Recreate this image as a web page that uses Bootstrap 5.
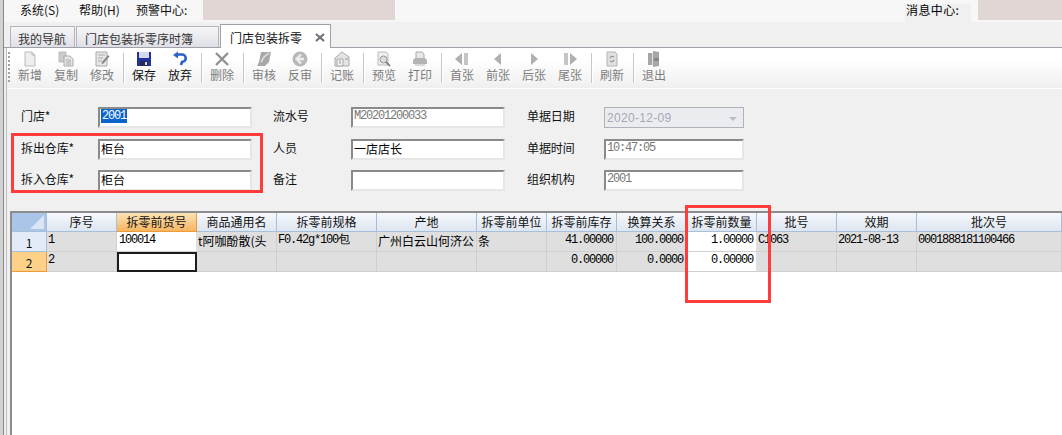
<!DOCTYPE html>
<html lang="zh">
<head>
<meta charset="utf-8">
<title>门店包装拆零</title>
<link href="https://cdn.jsdelivr.net/npm/bootstrap@5.3.0/dist/css/bootstrap.min.css" rel="stylesheet">
<style>
html,body{height:435px;overflow:hidden}
body{background:#f0f0f0;color:#000;font:12px/16px "Noto Sans CJK SC","Liberation Sans",sans-serif;position:relative}
.shell{border-left:3px solid #d2d2d2;height:435px}
.shell-inner{border-left:1px solid #888;height:100%;display:flex;flex-direction:column;min-height:0}
.topbar{height:22px;background:#f7f7f7;padding-left:16px;align-items:flex-start;flex:none}
.topbar .mi{line-height:20px;color:#111;flex:none}
.mi-a{width:59px}.mi-b{width:57px}.mi-c{width:67px}
.blk{width:192px;height:20px;background:#e0d6d4;flex:none}
.blk-r{width:84px}
.msg{margin:4px 7px 0 auto;line-height:12px;height:18px;padding:0 0 0 1px;width:66px;background:#f0f0f0;letter-spacing:.4px;flex:none}
.tabrow{height:26px;padding-left:6px;border-bottom:1px solid #a0a0a8;gap:1px;align-items:flex-end;flex:none}
.tabx{height:21px;border:1px solid #b4b4bc;border-bottom:0;background:linear-gradient(#f6f6f8,#dfe0e6);padding-left:7px;line-height:23px;color:#333;white-space:nowrap}
.tabx.t1{width:65px}
.tabx.t2{width:143px;padding-left:8px}
.tabx.on{width:111px;height:24px;background:#fff;border-color:#a0a0a8;margin:0 0 -1px 0;padding-left:9px;line-height:26px;color:#111;display:flex;position:relative;z-index:1}
.tabx svg{margin:8px 0 0 13px}
.workarea{flex:1;min-height:0;margin-left:2px;border-left:1px solid #bdbdbd;display:flex;flex-direction:column}
.tools{height:41px;background:linear-gradient(#fff 30%,#efefef);border-bottom:1px solid #fff;align-items:stretch;flex:none}
.grip{width:2px;margin:3px 2px 4px 1px;background-image:radial-gradient(#a0a0a0 45%,transparent 50%);background-size:2px 4px}
.tb{width:36px;color:#7d7d7d;text-align:center;padding-top:3px;line-height:14px;flex:none}
.tb svg{display:block;margin:0 auto 1px}
.tb.live{color:#111}
.sep{width:6px;position:relative;flex:none}
.sep::after{content:"";position:absolute;left:3px;top:5px;bottom:5px;width:1px;background:#c6c6c6;box-shadow:1px 0 0 #fff}
.formzone{height:122px;padding:18px 0 0 14px;display:grid;grid-template-columns:77px 154px 21px 78px 154px 22px 77px 140px;grid-auto-rows:21px;row-gap:10.5px;flex:none}
.lab{line-height:18px;color:#111;letter-spacing:-.1px}
.fld{border:2px solid;border-color:#8a8a8a #e6e6e6 #e6e6e6 #8a8a8a;background:#fff;padding:0 1px;line-height:15px;color:#000;overflow:hidden;white-space:nowrap}
.mono{font-family:"Liberation Mono",monospace;font-size:12px;letter-spacing:-1.2px;color:#777}
.fld .sel{background:#0a66cc;color:#fff;padding:0 1px}
.fld.dt{border:1px solid #aeb2ba;background:#ebecf0;color:#a5a8b4;font:12px/21px "Liberation Sans",sans-serif;letter-spacing:.3px;padding:0 0 0 2px;display:flex;justify-content:space-between}
.fld.dt i{width:0;height:0;border:4px solid transparent;border-top-color:#b9bcc6;border-bottom:0;margin:9px 6px 0 0}
.gridwrap{flex:1;background:#fff;border-top:2px solid #8c8c8c;border-left:2px solid #8c8c8c;margin-left:3px;min-height:0}
.sheet{table-layout:fixed;border-collapse:separate;border-spacing:0;width:1050px;margin:0;--bs-table-bg:transparent;--bs-table-border-color:transparent;color:#000}
.sheet th,.sheet td{padding:0;height:20px;overflow:hidden;white-space:nowrap;box-shadow:none;vertical-align:top;line-height:17px}
.sheet th{height:19px;font-weight:400;text-align:center;background:linear-gradient(#f6f8fc,#dde5f0);border-right:1px solid #a7bfd8;border-bottom:1px solid #a7bfd8;line-height:18px;color:#111}
.sheet th.corner{background:#a9c5e8;position:relative}
.sheet th.corner::after{content:"";position:absolute;right:2px;bottom:2px;border:7px solid transparent;border-right-color:#dbe6f4;border-bottom-color:#dbe6f4}
.sheet th.hot{background:linear-gradient(#fbe3b8,#f5b561);border-right-color:#f09a38;border-bottom-color:#f09a38}
.sheet th.rowh{height:20px;background:#e2ebf7;line-height:16px;padding-top:3px}
.sheet th.rowh.hot{background:#fdd188}
.sheet td{background:#dfdfdf;border-right:1px solid #cfcfcf;border-bottom:1px solid #cfcfcf;padding:0 1px;font-size:12px}
.sheet td.w{background:#fff;border-right-color:#dfdfdf;border-bottom-color:#cfcfcf}
.sheet td.cur{background:#fff;border:2px solid #1c1c1c}
.sheet td.m{font-family:"Liberation Mono",monospace;font-size:12px;letter-spacing:-1.2px}
.sheet td.pad{padding-left:2px}
.sheet td.r{text-align:right;padding-right:3px}
.redbox{position:absolute;border:3px solid #ff3b3b;pointer-events:none;z-index:5}
.rb1{left:11px;top:133px;width:252px;height:60px}
.rb2{left:685px;top:205px;width:86px;height:98px}
.c0{width:35px}.c1,.c6,.c7,.c8,.c9{width:70px}.c2,.c3,.c10,.c11{width:80px}.c4,.c5{width:100px}.c12{width:145px}
</style>
</head>
<body>
<div class="shell">
<div class="shell-inner">
  <div class="topbar d-flex">
    <span class="mi mi-a">系统(S)</span><span class="mi mi-b">帮助(H)</span><span class="mi mi-c">预警中心:</span>
    <div class="blk"></div>
    <div class="msg">消息中心:</div>
    <div class="blk blk-r"></div>
  </div>
  <div class="tabrow d-flex">
    <div class="tabx t1">我的导航</div>
    <div class="tabx t2">门店包装拆零序时簿</div>
    <div class="tabx on">门店包装拆零<svg width="10" height="9" viewBox="0 0 10 9"><path d="M1 1l8 7M9 1L1 8" stroke="#6f7078" stroke-width="2.2"/></svg></div>
  </div>
  <div class="workarea">
  <div class="tools d-flex">
    <div class="grip"></div>
    <div class="tb"><svg width="16" height="16" viewBox="0 0 16 16"><path d="M3 1h7l3 3v11H3z" fill="#eee" stroke="#bbb"/><path d="M10 1v3h3" fill="#ddd" stroke="#bbb"/></svg>新增</div>
    <div class="tb"><svg width="16" height="16" viewBox="0 0 16 16"><path d="M1 1h7v10H1z" fill="#ccc" stroke="#bbb"/><path d="M6 5h6l3 3v7H6z" fill="#e6e6e6" stroke="#aaa"/><path d="M8 9h5M8 11h5M8 13h5" stroke="#aaa"/></svg>复制</div>
    <div class="tb"><svg width="16" height="16" viewBox="0 0 16 16"><path d="M2 1h11v14H2z" fill="#e6e6e6" stroke="#aaa"/><path d="M4 4h7M4 7h5M4 10h4" stroke="#aaa"/><path d="M8 11l6-7 1.5 1.5-6 7-2 .5z" fill="#888"/></svg>修改</div>
    <div class="sep"></div>
    <div class="tb live"><svg width="16" height="16" viewBox="0 0 16 16"><path d="M1 1h14v14H1z" fill="#23319a"/><path d="M3 1h10v6H3z" fill="#d5d9f0"/><path d="M4 10h8v5H4z" fill="#222a55"/><path d="M9 11h2v3H9z" fill="#d5d9f0"/></svg>保存</div>
    <div class="tb live"><svg width="16" height="16" viewBox="0 0 16 16"><path d="M5 3.500h5a3.500 3.500 0 0 1 0 7.500l-1 3" fill="none" stroke="#2a62c8" stroke-width="2.6"/><path d="M1 4l5-3.500v7z" fill="#2a62c8"/></svg>放弃</div>
    <div class="sep"></div>
    <div class="tb"><svg width="16" height="16" viewBox="0 0 16 16"><path d="M2 2l12 12M14 2L2 14" stroke="#909090" stroke-width="2.4"/></svg>删除</div>
    <div class="sep"></div>
    <div class="tb"><svg width="16" height="16" viewBox="0 0 16 16"><path d="M5 1h10l-2 10-4 4H1l2-4z" fill="#a8a8a8"/><path d="M5 11l3-5 5-4" stroke="#e0e0e0" stroke-width="1.5" fill="none"/></svg>审核</div>
    <div class="tb"><svg width="16" height="16" viewBox="0 0 16 16"><circle cx="8" cy="8" r="7.500" fill="#b8b8b8"/><path d="M9 3.500L4.500 8 9 12.500M5 8h7" stroke="#eee" stroke-width="2.4" fill="none"/></svg>反审</div>
    <div class="sep"></div>
    <div class="tb"><svg width="16" height="16" viewBox="0 0 16 16"><path d="M1 7l7-6 7 5v9H1z" fill="#e4e4e4" stroke="#aaa"/><path d="M3 8h6v7H3z" fill="#f2f2f2" stroke="#aaa"/><path d="M5 10h2M5 12h2M11 8h3" stroke="#999"/></svg>记账</div>
    <div class="sep"></div>
    <div class="tb"><svg width="16" height="16" viewBox="0 0 16 16"><path d="M2 1h8l2 2v11H2z" fill="#efefef" stroke="#bbb"/><circle cx="7.500" cy="8.500" r="3.500" fill="#ddd" stroke="#999"/><path d="M10 11l4 4" stroke="#888" stroke-width="2"/></svg>预览</div>
    <div class="tb"><svg width="16" height="16" viewBox="0 0 16 16"><path d="M4 1h6l2 2v5H4z" fill="#e8e8e8" stroke="#aaa"/><path d="M1 9l2-2h10l2 2v4H1z" fill="#b4b4b4"/><path d="M3 13h10v2H3z" fill="#d8d8d8"/></svg>打印</div>
    <div class="sep"></div>
    <div class="tb"><svg width="16" height="16" viewBox="0 0 16 16"><path d="M8 2v12L1 8z" fill="#b0b0b0"/><path d="M10 2h4v12h-4z" fill="#c4c4c4"/></svg>首张</div>
    <div class="tb"><svg width="16" height="16" viewBox="0 0 16 16"><path d="M11 2v12L4 8z" fill="#b0b0b0"/></svg>前张</div>
    <div class="tb"><svg width="16" height="16" viewBox="0 0 16 16"><path d="M5 2v12l7-6z" fill="#b0b0b0"/></svg>后张</div>
    <div class="tb"><svg width="16" height="16" viewBox="0 0 16 16"><path d="M2 2h4v12H2z" fill="#c4c4c4"/><path d="M8 2v12l7-6z" fill="#b0b0b0"/></svg>尾张</div>
    <div class="sep"></div>
    <div class="tb"><svg width="16" height="16" viewBox="0 0 16 16"><path d="M3 1h8l2 2v12H3z" fill="#e0e0e0" stroke="#b4b4b4"/><path d="M6 7a2.500 2.500 0 0 1 4-1M10 9a2.500 2.500 0 0 1-4 1" stroke="#999" fill="none" stroke-width="1.2"/></svg>刷新</div>
    <div class="sep"></div>
    <div class="tb"><svg width="16" height="16" viewBox="0 0 16 16"><path d="M2 2h5V0l6 1v14l-6 1v-2H2z" fill="#a6a6a6"/><path d="M7 2v12h-1V2z" fill="#ddd"/><path d="M8 7h5v3H8z" fill="#888"/></svg>退出</div>
  </div>
  <div class="formzone">
    <div class="lab">门店*</div><div class="fld mono"><span class="sel">2001</span></div><div></div>
    <div class="lab">流水号</div><div class="fld mono">M20201200033</div><div></div>
    <div class="lab">单据日期</div><div class="fld dt">2020-12-09<i></i></div>
    <div class="lab">拆出仓库*</div><div class="fld">柜台</div><div></div>
    <div class="lab">人员</div><div class="fld">一店店长</div><div></div>
    <div class="lab">单据时间</div><div class="fld mono">10:47:05</div>
    <div class="lab">拆入仓库*</div><div class="fld">柜台</div><div></div>
    <div class="lab">备注</div><div class="fld"></div><div></div>
    <div class="lab">组织机构</div><div class="fld mono">2001</div>
  </div>
  <div class="gridwrap">
    <table class="table sheet">
      <colgroup><col class="c0"><col class="c1"><col class="c2"><col class="c3"><col class="c4"><col class="c5"><col class="c6"><col class="c7"><col class="c8"><col class="c9"><col class="c10"><col class="c11"><col class="c12"></colgroup>
      <thead><tr><th class="corner"></th><th>序号</th><th class="hot">拆零前货号</th><th>商品通用名</th><th>拆零前规格</th><th>产地</th><th>拆零前单位</th><th>拆零前库存</th><th>换算关系</th><th>拆零前数量</th><th>批号</th><th>效期</th><th>批次号</th></tr></thead>
      <tbody>
        <tr><th class="rowh">1</th><td class="m">1</td><td class="w m pad">100014</td><td>t阿咖酚散(头</td><td class="m">F0.42g*100包</td><td>广州白云山何济公</td><td>条</td><td class="m r">41.00000</td><td class="m r">100.0000</td><td class="w m r">1.00000</td><td class="m">C1063</td><td class="m">2021-08-13</td><td class="m">0001888181100466</td></tr>
        <tr><th class="rowh hot">2</th><td class="m">2</td><td class="cur"></td><td></td><td></td><td></td><td></td><td class="m r">0.00000</td><td class="m r">0.0000</td><td class="w m r">0.00000</td><td></td><td></td><td></td></tr>
      </tbody>
    </table>
  </div>
  </div>
</div>
</div>
<div class="redbox rb1"></div>
<div class="redbox rb2"></div>
</body>
</html>
